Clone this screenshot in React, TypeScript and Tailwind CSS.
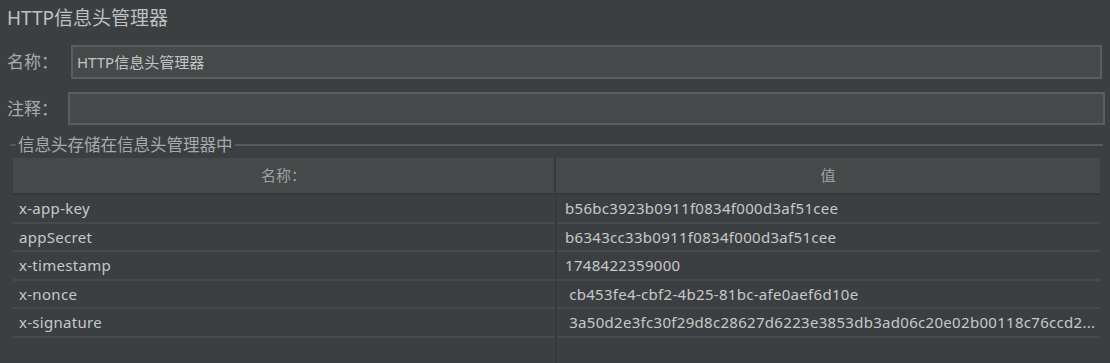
import React from "react";

const rows: [string, string][] = [
  ["x-app-key", "b56bc3923b0911f0834f000d3af51cee"],
  ["appSecret", "b6343cc33b0911f0834f000d3af51cee"],
  ["x-timestamp", "1748422359000"],
  ["x-nonce", "\u00a0cb453fe4-cbf2-4b25-81bc-afe0aef6d10e"],
  ["x-signature", "\u00a03a50d2e3fc30f29d8c28627d6223e3853db3ad06c20e02b00118c76ccd2..."],
];

export default function App() {
  return (
    <div
      className="w-[1110px] h-[363px] overflow-hidden bg-[#3c3f41] text-[#bbbbbb] flex flex-col"
      style={{ fontFamily: '"Noto Sans", "Noto Sans CJK SC", sans-serif' }}
    >
      <div className="h-[38px] pl-[7px] pt-[5px] text-[19px] leading-[26px] text-[#c0c0c0]">
        HTTP信息头管理器
      </div>
      <div className="mt-[7px] flex items-center h-[34px]">
        <div className="w-[71px] pl-[7px] text-[17px] text-[#a9a9a9]">名称：</div>
        <div className="w-[1031px] h-[34px] border-2 border-[#5a5e5f] bg-[#45494a] flex items-center pl-[4px] text-[15px] text-[#c4c4c4]">
          HTTP信息头管理器
        </div>
      </div>
      <div className="mt-[13px] flex items-center h-[33px]">
        <div className="w-[68px] pl-[7px] text-[17px] text-[#a9a9a9]">注释：</div>
        <div className="w-[1037px] h-[33px] border-2 border-[#5a5e5f] bg-[#45494a]" />
      </div>
      <div className="mt-[9px] ml-[10px] w-[1093px] flex items-center h-[22px]">
        <div className="w-[6px] h-[2px] bg-[#57595a]" />
        <div className="px-[2px] text-[16.5px] leading-[22px] text-[#a9a9a9]">信息头存储在信息头管理器中</div>
        <div className="flex-1 h-[2px] bg-[#57595a]" />
      </div>
      <div className="mt-[2px] ml-[13px] w-[1087px] flex-1 flex flex-col">
        <div className="flex h-[37px] bg-[#45494a] border-b-2 border-[#37393b] text-[15px] text-[#a0a0a0]">
          <div className="w-[543px] flex items-center justify-center border-r-2 border-[#37393b]">名称：</div>
          <div className="flex-1 flex items-center justify-center">值</div>
        </div>
        <div className="flex-1 relative">
          <div className="absolute left-[542px] top-0 bottom-0 w-[2px] bg-[#37393b]" />
          {rows.map(([k, v]) => (
            <div key={k} className="flex h-[28.6px] border-b-2 border-[#48494b] text-[15px] tracking-[0.3px] text-[#c8c8c8]">
              <div className="w-[543px] pl-[6px] flex items-center">{k}</div>
              <div className="flex-1 pl-[9px] flex items-center whitespace-nowrap overflow-hidden">{v}</div>
            </div>
          ))}
        </div>
      </div>
    </div>
  );
}
